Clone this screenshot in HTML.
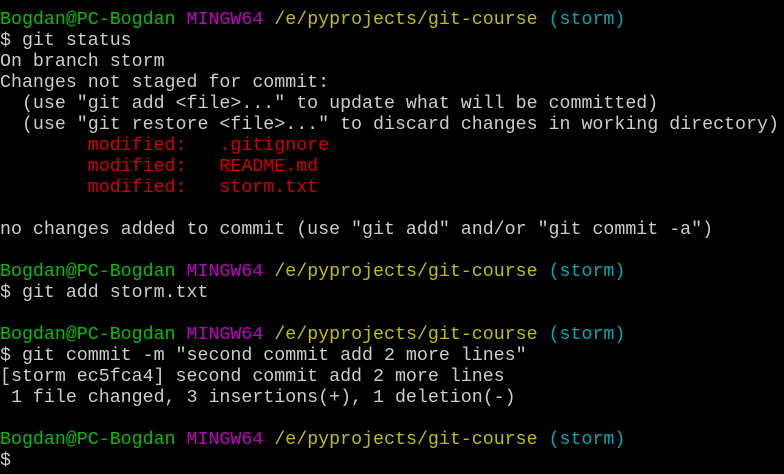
<html><head><style>
body{margin:0;background:#000;width:784px;height:474px;overflow:hidden}
pre{margin:0;padding:10px 0 0 0;font-family:"Liberation Mono",monospace;font-size:18.3px;line-height:21px;color:#cccccc}
.g{color:#00bf00}.m{color:#bf00bf}.y{color:#bfbf00}.c{color:#00a6b2}.r{color:#d00000}
</style></head><body><pre><span class="g">Bogdan@PC-Bogdan</span> <span class="m">MINGW64</span> <span class="y">/e/pyprojects/git-course</span> <span class="c">(storm)</span>
$ git status
On branch storm
Changes not staged for commit:
  (use "git add &lt;file&gt;..." to update what will be committed)
  (use "git restore &lt;file&gt;..." to discard changes in working directory)
        <span class="r">modified:   .gitignore</span>
        <span class="r">modified:   README.md</span>
        <span class="r">modified:   storm.txt</span>

no changes added to commit (use "git add" and/or "git commit -a")

<span class="g">Bogdan@PC-Bogdan</span> <span class="m">MINGW64</span> <span class="y">/e/pyprojects/git-course</span> <span class="c">(storm)</span>
$ git add storm.txt

<span class="g">Bogdan@PC-Bogdan</span> <span class="m">MINGW64</span> <span class="y">/e/pyprojects/git-course</span> <span class="c">(storm)</span>
$ git commit -m "second commit add 2 more lines"
[storm ec5fca4] second commit add 2 more lines
 1 file changed, 3 insertions(+), 1 deletion(-)

<span class="g">Bogdan@PC-Bogdan</span> <span class="m">MINGW64</span> <span class="y">/e/pyprojects/git-course</span> <span class="c">(storm)</span>
$
</pre></body></html>
